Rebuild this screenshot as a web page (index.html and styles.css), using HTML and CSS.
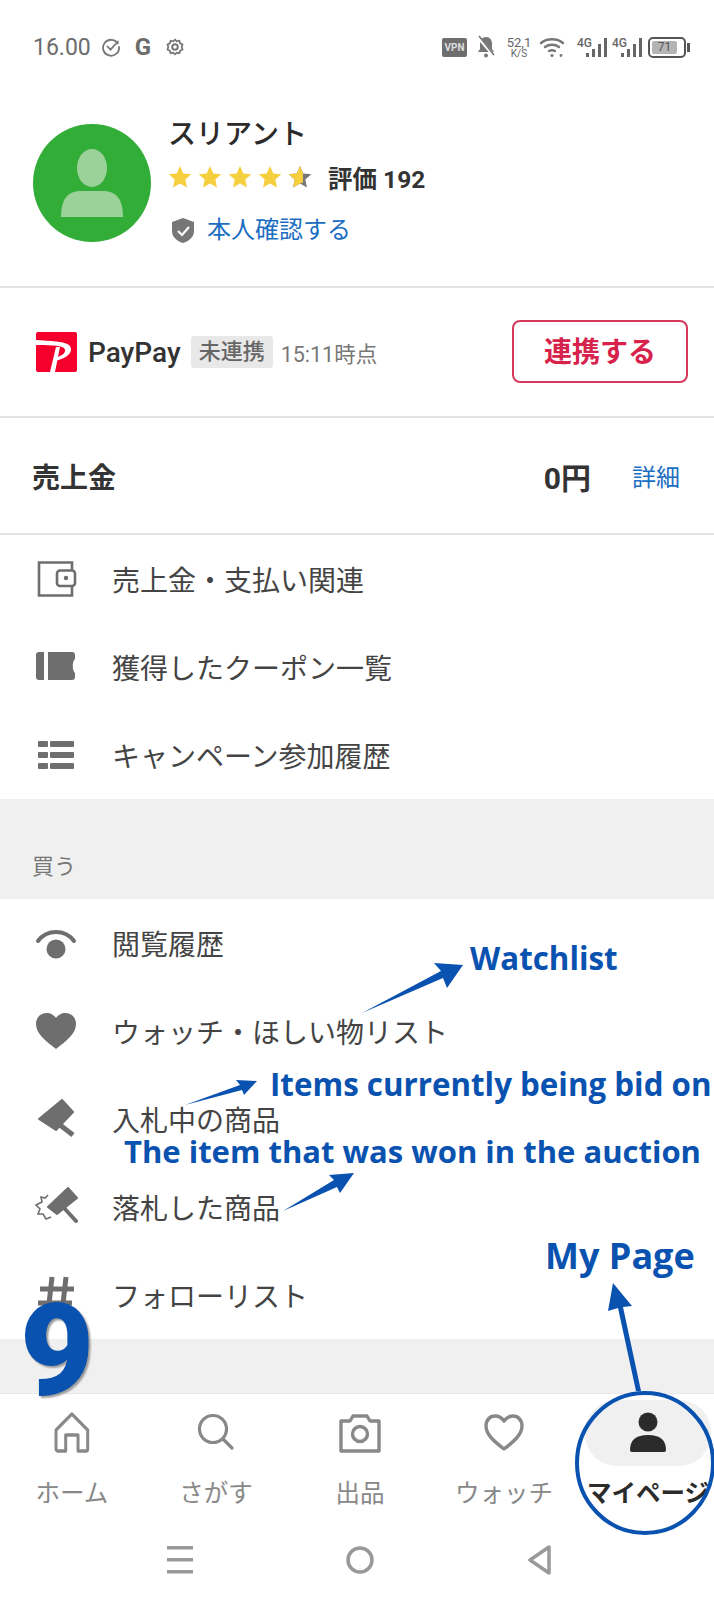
FILE: index.html
```html
<!DOCTYPE html>
<html lang="ja">
<head>
    <meta charset="UTF-8">
    <meta name="viewport" content="width=device-width, initial-scale=1.0">
    <title>マイページ</title>
    <link rel="stylesheet" href="styles.css">
</head>
<body>
<div class="page">
    <!-- status bar -->
    <div class="status_bar">
        <div class="status_left">
            <span class="time">16.00</span>
            <svg class="st_check" width="20" height="20" viewBox="0 0 20 20" fill="none" stroke="#777" stroke-width="1.8" stroke-linecap="round"><path d="M16.8 6.500A8 8 0 1 0 18 10"/><path d="M6.500 9.500l3 3.200L17 4.500"/></svg>
            <span class="st_g">G</span>
            <svg width="20" height="20" viewBox="0 0 20 20" fill="none" stroke="#777" stroke-width="2"><path d="M10 1.800l2 1.900 2.800-.5 1 2.700 2.500 1.300-.8 2.800.8 2.800-2.500 1.300-1 2.700-2.800-.5-2 1.900-2-1.900-2.800.5-1-2.700-2.500-1.300.8-2.800-.8-2.800 2.500-1.300 1-2.700 2.800.5z" transform="translate(1 1) scale(.9)"/><circle cx="10" cy="10" r="2.800"/></svg>
        </div>
        <div class="status_right">
            <span class="vpn">VPN</span>
            <svg width="20" height="24" viewBox="0 0 20 24" fill="#777"><path d="M10 2c-4 0-6 3-6 7v5l-2 3h16l-2-3V9c0-4-2-7-6-7z"/><circle cx="10" cy="20.500" r="2"/><path d="M2 2l16 19" stroke="#fff" stroke-width="3"/><path d="M3 1l15 19" stroke="#777" stroke-width="1.600"/></svg>
            <span class="speed">52,1<small>K/S</small></span>
            <svg class="st_wifi" width="26" height="22" viewBox="0 0 26 22" fill="none" stroke="#777" stroke-width="2.400" stroke-linecap="round"><path d="M2 7c6-5 16-5 22 0"/><path d="M6 11c4-3 10-3 14 0"/><path d="M10 15c2-1 4-1 6 0"/><circle cx="13" cy="19.500" r="1.600" fill="#777" stroke="none"/><circle cx="22" cy="19.500" r="1.400" fill="#777" stroke="none"/></svg>
            <span class="signal">4G<svg width="22" height="22" viewBox="0 0 22 22" fill="#666"><rect x="1" y="17" width="3" height="4"/><rect x="7" y="13" width="3" height="8"/><rect x="13" y="8" width="3" height="13"/><rect x="19" y="2" width="3" height="19"/></svg></span>
            <span class="signal signal_second">4G<svg width="22" height="22" viewBox="0 0 22 22" fill="#666"><rect x="1" y="17" width="3" height="4"/><rect x="7" y="13" width="3" height="8"/><rect x="13" y="8" width="3" height="13"/><rect x="19" y="2" width="3" height="19"/></svg></span>
            <span class="battery"><span class="battery_fill">71</span></span>
        </div>
    </div>

    <!-- profile -->
    <div class="profile">
        <div class="avatar">
            <svg width="118" height="118" viewBox="0 0 118 118" fill="#9ad29a"><ellipse cx="59" cy="44" rx="15" ry="19"/><path d="M28 93c0-17 6-26 20-26h22c14 0 20 9 20 26z"/></svg>
        </div>
        <div class="profile_info">
            <div class="name">スリアント</div>
            <div class="rating">
                <div class="stars">
                    <svg width="30" height="24" viewBox="0 0 24 24" fill="#f6cf3f"><path d="M12 1l3.300 7.400 8 .8-6 5.400 1.700 7.900-7-4-7 4 1.700-7.900-6-5.400 8-.8z"/></svg>
                    <svg width="30" height="24" viewBox="0 0 24 24" fill="#f6cf3f"><path d="M12 1l3.300 7.400 8 .8-6 5.400 1.700 7.900-7-4-7 4 1.700-7.900-6-5.400 8-.8z"/></svg>
                    <svg width="30" height="24" viewBox="0 0 24 24" fill="#f6cf3f"><path d="M12 1l3.300 7.400 8 .8-6 5.400 1.700 7.900-7-4-7 4 1.700-7.900-6-5.400 8-.8z"/></svg>
                    <svg width="30" height="24" viewBox="0 0 24 24" fill="#f6cf3f"><path d="M12 1l3.300 7.400 8 .8-6 5.400 1.700 7.900-7-4-7 4 1.700-7.900-6-5.400 8-.8z"/></svg>
                    <svg width="30" height="24" viewBox="0 0 24 24"><path fill="#777" d="M12 1l3.300 7.400 8 .8-6 5.400 1.700 7.900-7-4-7 4 1.700-7.900-6-5.400 8-.8z"/><path fill="#f6cf3f" d="M12 1l3 7v9.500l-3 1-7 4 1.700-7.900-6-5.400 8-.8z"/></svg>
                </div>
                <span class="score">評価 192</span>
            </div>
            <div class="verify">
                <svg width="24" height="27" viewBox="0 0 24 27"><path fill="#777" d="M12 1l11 4v9c0 6-5 10-11 12C6 24 1 20 1 14V5z"/><path fill="none" stroke="#fff" stroke-width="2.200" d="M7 14l4 4 7-8"/></svg>
                <span>本人確認する</span>
            </div>
        </div>
    </div>

    <!-- paypay -->
    <div class="paypay">
        <svg width="41" height="40" viewBox="0 0 41 40"><rect width="41" height="40" rx="2" fill="#f5002d"/><path fill="#fff" d="M0 8C14 9 28 9 33 13c5 5 1 13-15 16v-3c10-2 13-7 10-10-4-3-18-3-28-3z"/><path fill="#fff" d="M20 15h4l-5 25h-5z"/></svg>
        <span class="pp_name">PayPay</span>
        <span class="pp_tag">未連携</span>
        <span class="pp_time">15:11時点</span>
        <a class="pp_btn">連携する</a>
    </div>

    <!-- sales -->
    <div class="sales">
        <span class="sales_title">売上金</span>
        <span class="sales_amount">0円</span>
        <a class="sales_link">詳細</a>
    </div>

    <div class="menu">
        <div class="menu_row">
            <svg width="44" height="44" viewBox="0 0 44 44" fill="none" stroke="#6e6e6e" stroke-width="2.600"><path d="M38 13V5.500H5v33h33V29"/><rect x="23" y="13.500" width="18" height="15.500" rx="3"/><circle cx="32" cy="21" r="2.200" fill="#6e6e6e" stroke="none"/></svg>
            <span>売上金・支払い関連</span>
        </div>
        <div class="menu_row">
            <svg width="44" height="44" viewBox="0 0 44 44" fill="#6e6e6e"><path d="M10 7v28H5a3 3 0 0 1-3-3V10a3 3 0 0 1 3-3z"/><path d="M14 7h24a3 3 0 0 1 3 3v4c-3 3-3 11 0 14v4a3 3 0 0 1-3 3H14z"/></svg>
            <span>獲得したクーポン一覧</span>
        </div>
        <div class="menu_row">
            <svg width="44" height="44" viewBox="0 0 44 44" fill="#6e6e6e"><rect x="4" y="8" width="10" height="6" rx="1"/><rect x="16" y="8" width="24" height="6" rx="1"/><rect x="4" y="19" width="10" height="6" rx="1"/><rect x="16" y="19" width="24" height="6" rx="1"/><rect x="4" y="30" width="10" height="6" rx="1"/><rect x="16" y="30" width="24" height="6" rx="1"/></svg>
            <span>キャンペーン参加履歴</span>
        </div>
    </div>

    <div class="section_head">買う</div>

    <div class="menu">
        <div class="menu_row">
            <svg width="44" height="44" viewBox="0 0 44 44"><path fill="none" stroke="#6e6e6e" stroke-width="4" stroke-linecap="round" d="M4 20c9-12 27-12 36 0"/><circle cx="22" cy="28" r="9.500" fill="#6e6e6e"/></svg>
            <span>閲覧履歴</span>
        </div>
        <div class="menu_row">
            <svg width="44" height="44" viewBox="0 0 44 44" fill="#6e6e6e"><path d="M22 40C12 32 2 25 2 15 2 8 7 4 13 4c4 0 7 2 9 5 2-3 5-5 9-5 6 0 11 4 11 11 0 10-10 17-20 25z"/></svg>
            <span>ウォッチ・ほしい物リスト</span>
        </div>
        <div class="menu_row">
            <svg width="44" height="44" viewBox="0 0 44 44" fill="#6e6e6e"><path d="M28 3l11 12-17 18L5 22z" stroke="#6e6e6e" stroke-width="2" stroke-linejoin="round"/><path d="M26 28l13 10" fill="none" stroke="#6e6e6e" stroke-width="5"/></svg>
            <span>入札中の商品</span>
        </div>
        <div class="menu_row">
            <svg width="44" height="44" viewBox="0 0 44 44" fill="#6e6e6e"><path d="M34 3l9 10-20 16-9-7z" stroke="#6e6e6e" stroke-width="2" stroke-linejoin="round"/><path d="M31 24l11 12" fill="none" stroke="#6e6e6e" stroke-width="4" stroke-linecap="round"/><path d="M14 10l-3 3-4-1 1 5-6 3 4 4-2 5 5 0 3 5 5-2" fill="none" stroke="#6e6e6e" stroke-width="1.600"/></svg>
            <span>落札した商品</span>
        </div>
        <div class="menu_row">
            <svg width="44" height="44" viewBox="0 0 44 44" fill="none" stroke="#6e6e6e" stroke-width="5"><path d="M6 16h34M4 30h34M18 4l-4 36M32 4l-4 36"/></svg>
            <span>フォローリスト</span>
        </div>
    </div>

    <div class="gap_band"></div>

    <!-- bottom tabs -->
    <div class="tabs">
        <div class="tab">
            <div class="tab_icon"><svg width="44" height="44" viewBox="0 0 44 44" fill="none" stroke="#888" stroke-width="3.400" stroke-linejoin="round"><path d="M4 19L22 3l18 16v19a2 2 0 0 1-2 2h-9V24H15v16H6a2 2 0 0 1-2-2z" transform="translate(2.500 0) scale(.88 1)"/></svg></div>
            <span>ホーム</span>
        </div>
        <div class="tab">
            <div class="tab_icon"><svg width="44" height="44" viewBox="0 0 44 44" fill="none" stroke="#888" stroke-width="3.200" stroke-linecap="round"><circle cx="19" cy="18" r="13.500"/><path d="M29 28l9 9"/></svg></div>
            <span>さがす</span>
        </div>
        <div class="tab">
            <div class="tab_icon"><svg width="44" height="44" viewBox="0 0 44 44" fill="none" stroke="#888" stroke-width="3.400" stroke-linejoin="round"><path d="M3 10h9l3-5h14l3 5h9v30H3z"/><circle cx="22" cy="23" r="7.500"/></svg></div>
            <span>出品</span>
        </div>
        <div class="tab">
            <div class="tab_icon"><svg width="44" height="44" viewBox="0 0 44 44" fill="none" stroke="#888" stroke-width="3.400" stroke-linejoin="round"><path d="M22 38C13 31 4 24 4 15 4 9 8 5 13 5c4 0 7 2 9 5 2-3 5-5 9-5 5 0 9 4 9 10 0 9-9 16-18 23z"/></svg></div>
            <span>ウォッチ</span>
        </div>
        <div class="tab tab_active">
            <div class="tab_icon"><svg width="44" height="44" viewBox="0 0 44 44" fill="#2b2b2b"><circle cx="22" cy="11" r="9.500"/><path d="M4 39c0-10 6-15 18-15s18 5 18 15a2 2 0 0 1-2 2H6a2 2 0 0 1-2-2z"/></svg></div>
            <span>マイページ</span>
        </div>
    </div>

    <!-- android nav -->
    <div class="sys_nav">
        <svg width="28" height="30" viewBox="0 0 28 30" fill="#999"><rect x="1" y="1" width="26" height="3.500"/><rect x="1" y="13" width="26" height="3.500"/><rect x="1" y="25" width="26" height="3.500"/></svg>
        <svg width="30" height="30" viewBox="0 0 30 30" fill="none" stroke="#999" stroke-width="3.500"><circle cx="15" cy="15" r="12"/></svg>
        <svg width="26" height="30" viewBox="0 0 26 30" fill="none" stroke="#999" stroke-width="3.500" stroke-linejoin="round"><path d="M22 2v26L3 15z"/></svg>
    </div>

    <!-- notes drawn over the screenshot -->
    <svg class="arrows" width="714" height="1600" viewBox="0 0 714 1600" fill="#0a52b0">
        <path d="M362 1013L441 971 434 963 463 965 447 988 443 978z"/>
        <path d="M185 1105L240 1085 236 1080 257 1081 244 1095 242 1090z"/>
        <path d="M283 1211L334 1180 329 1175 354 1173 340 1193 337 1187z"/>
        <path d="M636 1391L618 1308 608 1311 613 1283 632 1306 623 1307 641 1391z"/>
        <ellipse cx="645" cy="1463" rx="68" ry="70" fill="none" stroke="#0a52b0" stroke-width="4"/>
    </svg>
    <span class="note note_watch">Watchlist</span>
    <span class="note note_bid">Items currently being bid on</span>
    <span class="note note_won">The item that was won in the auction</span>
    <span class="note note_mypage">My Page</span>
    <span class="big_num">9</span>
</div>
</body>
</html>
```
FILE: styles.css
```css
*{
    margin: 0;
    padding: 0;
    box-sizing: border-box;
}
body{
    width: 714px;
    height: 1600px;
    overflow: hidden;
    background: #fff;
    font-family: "Roboto", "Noto Sans CJK JP", sans-serif;
    color: #333;
}
.page{
    width: 714px;
    height: 1600px;
    position: relative;
    overflow: hidden;
}

/* status bar */
.status_bar{
    height: 94px;
    padding: 0 28px 0 33px;
    display: flex;
    justify-content: space-between;
    align-items: center;
    color: #666;
}
.status_left, .status_right{
    display: flex;
    align-items: center;
}
.status_left{
    gap: 12px;
}
.time{
    font-size: 23px;
    color: #6c6c6c;
    margin-right: -2px;
}
.st_check{
    margin-right: 2px;
}
.st_g{
    font-size: 24px;
    font-weight: 700;
    color: #6c6c6c;
    margin-right: 2px;
}
.status_right{
    gap: 9px;
}
.vpn{
    width: 25px;
    height: 19px;
    background: #6e6e6e;
    border-radius: 2px;
    color: #ddd;
    font-size: 10px;
    font-weight: 700;
    line-height: 19px;
    text-align: center;
}
.speed{
    width: 28px;
    font-size: 13px;
    line-height: 13px;
    text-align: center;
    display: flex;
    flex-direction: column;
}
.speed small{
    font-size: 10px;
    line-height: 10px;
}
.st_wifi{
    margin: 0 3px 0 -3px;
}
.signal{
    display: flex;
    align-items: flex-start;
    font-size: 12px;
    font-weight: 500;
    line-height: 14px;
    height: 22px;
}
.signal svg{
    margin-left: -7px;
}
.signal_second{
    margin-left: -4px;
}
.battery{
    width: 38px;
    height: 21px;
    border: 2px solid #555;
    border-radius: 5px;
    padding: 2px;
    position: relative;
    margin-left: -3px;
}
.battery::after{
    content: "";
    position: absolute;
    right: -6px;
    top: 4px;
    width: 3px;
    height: 9px;
    background: #555;
}
.battery_fill{
    display: block;
    width: 25px;
    height: 13px;
    background: #b4b4b4;
    border-radius: 2px;
    font-size: 12px;
    line-height: 13px;
    text-align: center;
    color: #555;
}

/* profile */
.profile{
    height: 194px;
    padding: 30px 0 0 33px;
    display: flex;
    border-bottom: 2px solid #e2e2e2;
}
.avatar{
    width: 118px;
    height: 118px;
    background: #31ad38;
    border-radius: 50%;
}
.profile_info{
    margin-left: 17px;
}
.name{
    font-size: 28px;
    font-weight: 500;
    line-height: 40px;
    color: #2b2b2b;
    margin-top: -9px;
}
.rating{
    display: flex;
    align-items: center;
    height: 32px;
    margin-top: 6px;
}
.stars{
    display: flex;
    margin-left: -3px;
    width: 163px;
}
.score{
    font-size: 24.500px;
    font-weight: 700;
    color: #333;
}
.verify{
    display: flex;
    align-items: center;
    gap: 12px;
    margin-top: 21px;
    margin-left: 3px;
    font-size: 24px;
    color: #1b6ec2;
    line-height: 32px;
}

/* paypay */
.paypay{
    height: 130px;
    padding: 0 26px 0 36px;
    display: flex;
    align-items: center;
    border-bottom: 2px solid #e2e2e2;
}
.pp_name{
    margin-left: 11px;
    font-size: 28px;
    font-weight: 500;
    color: #333;
}
.pp_tag{
    margin-left: 10px;
    width: 82px;
    height: 32px;
    line-height: 32px;
    text-align: center;
    background: #e8e8e8;
    border-radius: 3px;
    font-size: 22px;
    font-weight: 500;
    color: #666;
}
.pp_time{
    margin-left: 8px;
    font-size: 21.500px;
    color: #777;
}
.pp_btn{
    margin-left: auto;
    margin-bottom: 1px;
    width: 176px;
    height: 63px;
    line-height: 61px;
    text-align: center;
    border: 2px solid #d5395c;
    border-radius: 8px;
    font-size: 28px;
    font-weight: 700;
    color: #d7224b;
}

/* sales */
.sales{
    height: 117px;
    padding: 0 34px 0 32px;
    display: flex;
    align-items: center;
    border-bottom: 2px solid #e2e2e2;
}
.sales_title{
    font-size: 28px;
    font-weight: 700;
    color: #333;
}
.sales_amount{
    margin-left: auto;
    font-size: 30px;
    font-weight: 700;
    color: #333;
}
.sales_link{
    margin-left: 41px;
    font-size: 24px;
    color: #1b6ec2;
}

/* list */
.menu_row{
    height: 88px;
    padding-left: 34px;
    display: flex;
    align-items: center;
    gap: 34px;
    font-size: 28px;
    color: #444;
}
.section_head{
    height: 100px;
    padding: 52px 0 0 32px;
    background: #f0f0f0;
    font-size: 22px;
    line-height: 32px;
    color: #777;
}
.gap_band{
    height: 54px;
    background: #f0f0f0;
}

/* bottom tabs */
.tabs{
    width: 720px;
    height: 127px;
    display: grid;
    grid-template-columns: repeat(5, 144px);
    border-top: 1px solid #e8e8e8;
}
.tab{
    padding-top: 17px;
    display: flex;
    flex-direction: column;
    align-items: center;
    font-size: 24.500px;
    color: #888;
}
.tab_icon{
    height: 44px;
    margin-bottom: 21px;
}
.tab span{
    line-height: 36px;
}
.tab_active span{
    font-weight: 700;
    color: #2b2b2b;
}
.tab_active .tab_icon{
    width: 126px;
    height: 66px;
    margin-top: -11px;
    margin-bottom: 10px;
    padding-top: 11px;
    background: #f0f0f0;
    border-radius: 32px;
    display: flex;
    justify-content: center;
}

/* android nav */
.sys_nav{
    width: 720px;
    height: 80px;
    display: grid;
    grid-template-columns: repeat(3, 180px);
    padding-left: 90px;
    justify-items: center;
    align-items: center;
}

/* annotations */
.arrows{
    position: absolute;
    left: 0;
    top: 0;
}
.note{
    position: absolute;
    font-family: "Open Sans", sans-serif;
    font-weight: 700;
    font-size: 31.300px;
    line-height: 34px;
    color: #0a52b0;
    white-space: nowrap;
}
.note_watch{
    left: 470px;
    top: 941px;
}
.note_bid{
    left: 270px;
    top: 1067px;
}
.note_won{
    left: 124px;
    top: 1134px;
    font-size: 31px;
}
.note_mypage{
    left: 545px;
    top: 1239px;
    font-size: 36px;
}
.big_num{
    position: absolute;
    left: 20px;
    top: 1276px;
    font-family: "Roboto", sans-serif;
    font-weight: 900;
    font-size: 128px;
    line-height: 150px;
    color: #0a52b0;
    text-shadow: 2px 2px 2px #9a9a9a;
}
```
